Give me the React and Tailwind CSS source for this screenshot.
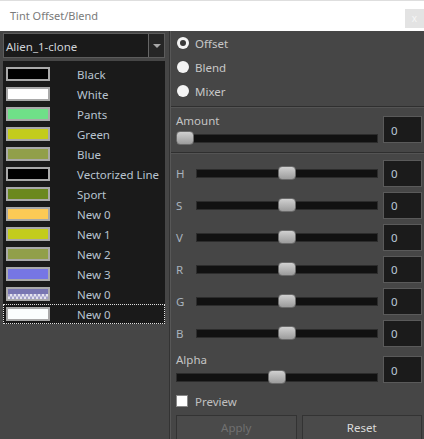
import React from 'react';

const swatches = [
    { name: 'Black', color: '#000000' },
    { name: 'White', color: '#ffffff' },
    { name: 'Pants', color: '#6fe088' },
    { name: 'Green', color: '#c3cc1c' },
    { name: 'Blue', color: '#919f4a' },
    { name: 'Vectorized Line', color: '#000000' },
    { name: 'Sport', color: '#6b881e' },
    { name: 'New 0', color: '#fcca55' },
    { name: 'New 1', color: '#c3cc1c' },
    { name: 'New 2', color: '#919f4a' },
    { name: 'New 3', color: '#7676e4' },
    { name: 'New 0', color: 'checker' },
    { name: 'New 0', color: '#fbfefe', selected: true },
];

const Checker = () => (
    <svg width="40" height="10" viewBox="0 0 40 10" className="block">
        <rect x="0" y="0" width="40" height="5" fill="#7876b2" />
        <rect x="0" y="5" width="40" height="5" fill="#e4e4ee" />
        {Array.from({ length: 10 }).map((_, i) => (
            <rect key={i} x={i * 4} y={5} width="2" height="2.5" fill="#a4a2cc" />
        ))}
        {Array.from({ length: 10 }).map((_, i) => (
            <rect key={'b' + i} x={i * 4 + 2} y={7.5} width="2" height="2.5" fill="#a4a2cc" />
        ))}
    </svg>
);

const Slider = ({ pos }) => (
    <div className="relative flex-1 h-[14px] flex items-center">
        <div className="w-full h-[9px] bg-[#111111] border border-[#2c2c2c]" />
        <div
            className="absolute top-0 w-[18px] h-[14px] rounded-[4px] border border-[#6a6a6a] bg-gradient-to-b from-[#d0d0d0] to-[#9c9c9c]"
            style={pos === 'left' ? { left: 0 } : { left: 'calc(50% - 9px)' }}
        />
    </div>
);

const NumBox = ({ className = '' }) => (
    <div className={`w-[39px] h-[27px] shrink-0 bg-[#1b1b1b] border border-[#5a5a5a] flex items-center pl-[7px] text-[11.5px] text-[#b9c8d8] ${className}`}>
        <span className="translate-y-[1px]">0</span>
    </div>
);

const Radio = ({ label, checked }) => (
    <div className="h-[24px] shrink-0 flex items-center pl-[6px]">
        {checked ? (
            <div className="w-[12px] h-[12px] rounded-full bg-[#f4f4f4] flex items-center justify-center">
                <div className="w-[6px] h-[6px] rounded-full bg-[#3a3a3a]" />
            </div>
        ) : (
            <div className="w-[12px] h-[12px] rounded-full bg-[#f4f4f4]" />
        )}
        <span className="ml-[6px] translate-y-[1px] text-[11.5px] text-[#c8c8c8]">{label}</span>
    </div>
);

const Rule = () => <div className="h-[2px] shrink-0 border-t border-[#2f2f2f] border-b border-b-[#545454]" />;

export default function App() {
    return (
        <div className="w-[424px] h-[439px] overflow-hidden flex flex-col" style={{ fontFamily: '"Noto Sans", "Open Sans", sans-serif' }}>
            <div className="h-[31px] shrink-0 bg-white border-t border-[#dedede] flex items-center justify-between">
                <span className="pl-[10px] text-[11px] text-[#7a7a7a]">Tint Offset/Blend</span>
                <div className="w-[19px] h-[19px] mt-[4px] bg-[#e3e3e3] flex items-center justify-center text-[10px] leading-none text-[#f6f6f6]">x</div>
            </div>

            <div className="flex-1 min-h-0 overflow-hidden bg-[#464646] flex">
                {/* colour list */}
                <div className="w-[169px] shrink-0 pl-[3px] pt-[2px]">
                    <div className="w-[162px] h-[25px] flex bg-[#1a1a1a] border border-[#5c5c5c]">
                        <div className="flex-1 flex items-center pl-[2px] text-[11.5px] text-[#d0d4d8]">
                            <span className="translate-y-[1px]">Alien_1-clone</span>
                        </div>
                        <div className="w-[16px] border-l border-[#666666] bg-[#262626] flex items-center justify-center">
                            <div className="w-0 h-0 border-l-[4px] border-r-[4px] border-t-[4px] border-l-transparent border-r-transparent border-t-[#a8a8a8]" />
                        </div>
                    </div>
                    <div className="w-[162px] h-[263px] mt-[3px] pt-[3px] bg-[#1a1a1a]">
                        {swatches.map((s, i) => (
                            <div key={i} className={`h-[20px] flex items-center ${s.selected ? 'border border-dotted border-[#e0e0e0]' : ''}`}>
                                <div className={`${s.selected ? 'ml-[2px]' : 'ml-[3px]'} w-[44px] h-[14px] border-2 border-[#a9a9a9] overflow-hidden`}>
                                    {s.color === 'checker' ? <Checker /> : <div className="w-full h-full" style={{ backgroundColor: s.color }} />}
                                </div>
                                <span className="ml-[27px] translate-y-[1px] text-[11.5px] text-[#b8c4d0] whitespace-nowrap">{s.name}</span>
                            </div>
                        ))}
                    </div>
                </div>

                <div className="w-[1px] bg-[#333333]" />
                <div className="w-[1px] bg-[#575757]" />

                {/* controls */}
                <div className="flex-1 flex flex-col">
                    <Radio label="Offset" checked />
                    <Radio label="Blend" />
                    <Radio label="Mixer" />
                    <div className="mt-[3px] shrink-0"><Rule /></div>

                    <div className="h-[44px] shrink-0 flex">
                        <div className="flex-1 pl-[5px] pt-[6px] flex flex-col">
                            <span className="text-[11.5px] leading-[14px] text-[#c4c4c4]">Amount</span>
                            <div className="mt-[3px] flex"><Slider pos="left" /></div>
                        </div>
                        <NumBox className="mt-[8px] ml-[5px] mr-[2px]" />
                    </div>
                    <Rule />

                    <div className="pt-[3px] shrink-0 flex flex-col">
                        {['H', 'S', 'V', 'R', 'G', 'B'].map((l) => (
                            <div key={l} className="h-[32px] flex items-center pl-[5px]">
                                <span className="w-[20px] translate-y-[1px] text-[11.5px] text-[#a9b3bd]">{l}</span>
                                <Slider />
                                <NumBox className="ml-[5px] mr-[2px]" />
                            </div>
                        ))}
                    </div>

                    <div className="h-[42px] shrink-0 flex">
                        <div className="flex-1 pl-[5px] pt-[4px] flex flex-col">
                            <span className="text-[11.5px] leading-[14px] text-[#c4c4c4]">Alpha</span>
                            <div className="mt-[3px] flex"><Slider /></div>
                        </div>
                        <NumBox className="mt-[7px] ml-[5px] mr-[2px]" />
                    </div>

                    <div className="h-[20px] shrink-0 flex items-center pl-[5px]">
                        <div className="w-[12px] h-[12px] bg-white border border-[#888888]" />
                        <span className="ml-[7px] translate-y-[1px] text-[11.5px] text-[#c0c0c0]">Preview</span>
                    </div>

                    <div className="mt-[4px] shrink-0 flex gap-[5px] pl-[5px] pr-[2px]">
                        <div className="flex-1 h-[26px] bg-[#4a4a4a] border border-[#333333] flex items-center justify-center text-[11.5px] text-[#707070]">Apply</div>
                        <div className="flex-1 h-[26px] bg-[#4a4a4a] border border-[#333333] flex items-center justify-center text-[11.5px] text-[#dadada]">Reset</div>
                    </div>
                </div>
            </div>
        </div>
    );
}
